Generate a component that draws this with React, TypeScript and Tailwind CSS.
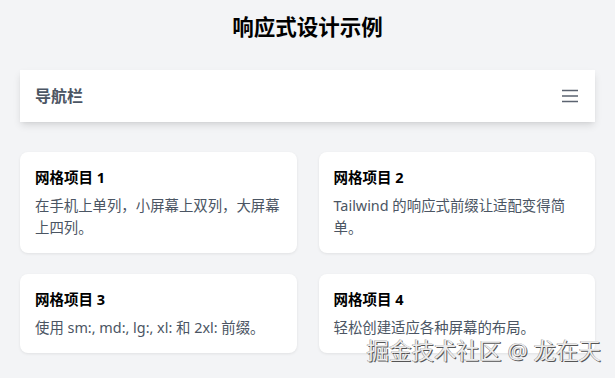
export default function App() {
  const items = [
    { title: '网格项目 1', text: '在手机上单列，小屏幕上双列，大屏幕上四列。' },
    { title: '网格项目 2', text: 'Tailwind 的响应式前缀让适配变得简单。' },
    { title: '网格项目 3', text: '使用 sm:, md:, lg:, xl: 和 2xl: 前缀。' },
    { title: '网格项目 4', text: '轻松创建适应各种屏幕的布局。' },
  ]

  return (
    <div
      className="relative min-h-[378px] bg-[#f3f4f6] px-5 pt-[11px] pb-6 text-[#111827]"
      style={{ fontFamily: '"Noto Sans", "Noto Sans CJK SC", sans-serif' }}
    >
      <h1 className="text-center text-[21.5px] font-bold leading-[32px] text-black">响应式设计示例</h1>

      <nav className="mt-[27px] flex h-[52px] items-center justify-between bg-white pl-[15px] pr-[17px] shadow-[0_4px_8px_-1px_rgba(0,0,0,0.12),0_2px_4px_-2px_rgba(0,0,0,0.08)]">
        <span className="text-[16px] font-bold text-[#4b5563]">导航栏</span>
        <svg width="16" height="14" viewBox="0 0 16 14" fill="none" stroke="#5b6370" strokeWidth="1.5">
          <path d="M0 1.5h16M0 7h16M0 12.5h16" />
        </svg>
      </nav>

      <div className="mt-[30px] grid grid-cols-2 gap-x-[22px] gap-y-[21px]">
        {items.map((item) => (
          <div key={item.title} className="rounded-lg bg-white px-[15px] pt-[15px] pb-[14px] shadow-[0_1px_3px_rgba(0,0,0,0.08)]">
            <h2 className="text-[14.5px] font-bold leading-[20px] text-black">{item.title}</h2>
            <p className="mt-[8px] text-[14.4px] leading-[22px] text-[#4b5563]">{item.text}</p>
          </div>
        ))}
      </div>

      <div
        className="pointer-events-none absolute right-[14px] top-[336px] text-[22.5px] leading-[30px] text-[#ececec]"
        style={{ textShadow: '1px 1px 0 #555, -0.5px -0.5px 0 #888' }}
      >
        掘金技术社区 @ 龙在天
      </div>
    </div>
  )
}
